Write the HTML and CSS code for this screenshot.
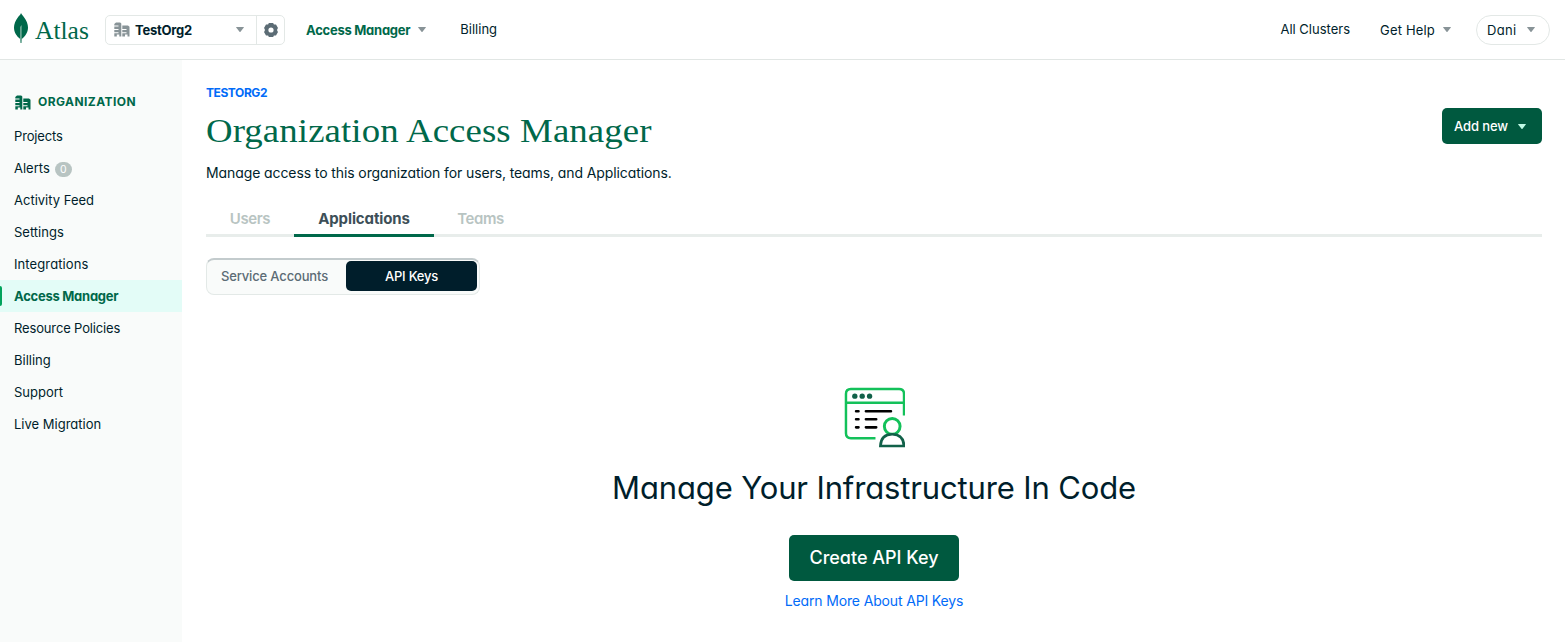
FILE: index.html
```html
<!DOCTYPE html>
<html lang="en">
<head>
<meta charset="utf-8">
<title>Organization Access Manager</title>
<link rel="stylesheet" href="styles.css">
</head>
<body>
<svg class="defs" width="0" height="0" aria-hidden="true">
  <symbol id="org" viewBox="0 0 16 15">
    <path fill="currentColor" d="M2 .5H6.200L7.300 1.500V14.500H5.300V12.500H2.800V14.500H.3V11.200H4.500V10.200H.3V7.900H4.500V6.900H.3V4.600H4.500V3.600H.3V2ZM8.300 3.500H14L15.500 4.800V14.500H13.500V12.500H11V14.500H8.300V11.200H12.500V10.200H8.300V7.900H12.500V6.900H8.300Z"/>
  </symbol>
  <symbol id="caret" viewBox="0 0 8 5">
    <path fill="currentColor" d="M.5 0H7.500Q8.200 0 7.800.6L4.500 4.700Q4 5.200 3.500 4.700L.2.600Q-.2 0 .5 0Z"/>
  </symbol>
</svg>

<header class="topbar">
  <a class="brand">
    <svg class="leaf" width="14" height="31" viewBox="0 0 14 31">
      <path fill="#00684a" d="M7 0C7.600 1.600 8.800 2.300 10 4.200C12.500 7.500 14 11 14 14.500C14 19.500 11.300 23.300 7.700 26L7.400 30H6.600L6.200 26C2.500 23 0 19.500 0 14.500C0 11 1.500 7.500 4 4.200C5.200 2.600 6.500 1.700 7 0Z"/>
      <path fill="#82b5a3" d="M7.600 12V26L7.400 30H6.700L6.200 25.800V14Z"/>
    </svg>
    <span class="brand-name">Atlas</span>
  </a>
  <div class="org-picker">
    <div class="org-current">
      <svg class="org-icon" width="16" height="15"><use href="#org"/></svg>
      <span class="org-name">TestOrg2</span>
      <svg class="caret" width="8" height="5"><use href="#caret"/></svg>
    </div>
    <div class="org-settings">
      <svg width="14" height="14" viewBox="0 0 14 14"><path fill="#5c6c75" fill-rule="evenodd" d="M4.800 0H9.200L9.700 1.200L10.400 1.600L12 1.500L14 5L13.200 6.300V7.700L14 9L12 12.500L10.400 12.400L9.700 12.800L9.200 14H4.800L4.300 12.800L3.600 12.400L2 12.500L0 9L.8 7.700V6.300L0 5L2 1.500L3.600 1.600L4.300 1.200ZM7 4.400A2.600 2.600 0 1 0 7 9.600A2.600 2.600 0 1 0 7 4.400Z"/></svg>
    </div>
  </div>
  <nav class="primary">
    <a class="primary-link current">Access Manager <svg class="caret" width="8" height="5"><use href="#caret"/></svg></a>
    <a class="primary-link raised">Billing</a>
  </nav>
  <nav class="account">
    <a class="raised clusters">All Clusters</a>
    <a class="help">Get Help <svg class="caret" width="8" height="5"><use href="#caret"/></svg></a>
    <a class="user">Dani <svg class="caret" width="8" height="5"><use href="#caret"/></svg></a>
  </nav>
</header>

<div class="body">
  <aside class="sidebar">
    <h2 class="side-title"><svg width="16" height="15"><use href="#org"/></svg>ORGANIZATION</h2>
    <a class="side-link tight">Projects</a>
    <a class="side-link">Alerts <span class="count">0</span></a>
    <a class="side-link">Activity Feed</a>
    <a class="side-link">Settings</a>
    <a class="side-link wide">Integrations</a>
    <a class="side-link active">Access Manager</a>
    <a class="side-link tight">Resource Policies</a>
    <a class="side-link">Billing</a>
    <a class="side-link">Support</a>
    <a class="side-link">Live Migration</a>
  </aside>

  <main class="content">
    <div class="heading">
      <div class="heading-text">
        <a class="crumb">TESTORG2</a>
        <h1 class="title">Organization Access Manager</h1>
        <p class="lede">Manage access to this organization for users, teams, and Applications.</p>
      </div>
      <button class="add-new">Add new <svg class="caret-light" width="8" height="5"><use href="#caret"/></svg></button>
    </div>

    <div class="tabs">
      <a class="tab users">Users</a>
      <a class="tab selected">Applications</a>
      <a class="tab teams">Teams</a>
    </div>

    <div class="segmented">
      <a class="segment">Service Accounts</a>
      <a class="segment chosen">API Keys</a>
    </div>

    <section class="empty">
      <svg width="61" height="61" viewBox="0 0 62 62" fill="none">
        <path stroke="#13c15a" stroke-width="2.500" d="M32 52H7Q2 52 2 47V7Q2 2 7 2H56Q61 2 61 7V29M2 16H61"/>
        <g fill="#116149"><circle cx="11" cy="9.300" r="2.700"/><circle cx="18.500" cy="9.300" r="2.700"/><circle cx="26" cy="9.300" r="2.700"/></g>
        <path stroke="#000" stroke-width="2.700" stroke-linecap="round" d="M12.300 24.600H14.700M22.300 24.600H47.700M12.300 32.800H14.700M22.300 32.800H32.700M12.300 41H14.700M22.300 41H32.700"/>
        <circle cx="49" cy="40" r="8" stroke="#13c15a" stroke-width="3" fill="#fff"/>
        <path stroke="#116149" stroke-width="2.700" d="M37 60Q37.500 48 49 48T61 60Z" fill="#fff"/>
      </svg>
      <h2 class="empty-title">Manage Your Infrastructure In Code</h2>
      <button class="create">Create API Key</button>
      <a class="learn">Learn More About API Keys</a>
    </section>
  </main>
</div>
</body>
</html>
```
FILE: styles.css
```css
* { box-sizing: border-box; }

body {
  margin: 0;
  height: 642px;
  overflow: hidden;
  display: flex;
  flex-direction: column;
  background: #fff;
  color: #001e2b;
  font: 13px/20px Inter, "Liberation Sans", sans-serif;
  font-feature-settings: "cv11";
}

h1, h2, p { margin: 0; }
svg { display: block; flex: none; }
button { border: 0; padding: 0; font: inherit; font-feature-settings: inherit; }
.defs { position: absolute; }
.caret { color: #889397; }

/* Top bar */
.topbar {
  flex: none;
  height: 60px;
  display: flex;
  align-items: center;
  padding: 0 15px 0 14px;
  border-bottom: 1px solid #e1e6e4;
}
.brand { display: flex; align-items: center; width: 91px; height: 59px; color: #00684a; }
.leaf { margin-bottom: 2px; }
.brand-name {
  margin: 3px 0 0 7px;
  font: 25.5px/30px "Liberation Serif", serif;
}
.org-picker {
  display: flex;
  width: 180px;
  height: 30px;
  border: 1px solid #e3e8e6;
  border-radius: 5px;
}
.org-current { display: flex; align-items: center; width: 151px; padding: 0 12px 0 8px; border-right: 1px solid #e3e8e6; }
.org-icon { color: #889397; }
.org-name { flex: 1; margin: 1px 0 0 5px; font-weight: 700; letter-spacing: -.23px; }
.org-settings { flex: 1; display: grid; place-items: center; }
.primary { display: flex; margin-left: 21px; }
.primary-link { display: flex; align-items: center; }
.primary-link.current { gap: 8px; margin-right: 34px; color: #00684a; font-weight: 700; letter-spacing: -.26px; }
.raised { padding-bottom: 2px; }
.account { display: flex; align-items: center; margin-left: auto; }
.clusters { margin-right: 30px; }
.help { display: flex; align-items: center; gap: 8px; margin-right: 25px; letter-spacing: .18px; }
.user {
  display: flex;
  align-items: center;
  justify-content: space-between;
  width: 74px;
  height: 30px;
  padding: 0 14px 0 10px;
  border: 1px solid #e3e8e6;
  border-radius: 15px;
  letter-spacing: .3px;
}

/* Side navigation */
.body { flex: 1; display: flex; }
.sidebar { width: 182px; padding-top: 32px; background: #f9fbfa; }
.side-title {
  display: flex;
  align-items: center;
  gap: 7px;
  height: 20px;
  margin-bottom: 8px;
  padding-left: 15px;
  color: #00684a;
  font-size: 12px;
  letter-spacing: .43px;
}
.side-link { position: relative; display: flex; align-items: center; height: 32px; padding-left: 14px; }
.side-link.tight { letter-spacing: -.15px; }
.side-link.wide { letter-spacing: .1px; }
.side-link.active { background: #e3fcf7; color: #00684a; font-weight: 700; letter-spacing: -.26px; }
.side-link.active::before {
  content: "";
  position: absolute;
  left: 0;
  top: 6px;
  width: 2px;
  height: 20px;
  border-radius: 0 4px 4px 0;
  background: #00a35c;
}
.count {
  width: 17px;
  height: 15px;
  margin: 2px 0 0 5px;
  border-radius: 8px;
  background: #b8c4c2;
  color: #fff;
  font-size: 10.5px;
  line-height: 15px;
  text-align: center;
}

/* Page heading */
.content { flex: 1; padding: 23px 23px 0 24px; }
.heading { display: flex; justify-content: space-between; height: 121px; }
.heading-text { display: flex; flex-direction: column; }
.crumb { color: #016bf8; font-size: 12px; font-weight: 700; letter-spacing: -.43px; }
.title {
  margin-top: 8px;
  color: #00684a;
  font: 34px/40px "Liberation Serif", serif;
  letter-spacing: .1px;
  white-space: nowrap;
  transform: scaleX(1.082);
  transform-origin: left;
}
.lede { margin-top: 12px; font-size: 14px; letter-spacing: -.1px; }
.add-new {
  display: flex;
  align-items: center;
  justify-content: space-between;
  width: 100px;
  height: 36px;
  margin-top: 25px;
  padding: 0 16px 0 12px;
  border-radius: 5px;
  background: #00593f;
  color: #fff;
  font-weight: 500;
  letter-spacing: -.1px;
}
.caret-light { color: #c0fae6; }

/* Tabs */
.tabs { display: flex; height: 33px; box-shadow: inset 0 -3px #e8edeb; }
.tab {
  display: flex;
  justify-content: center;
  padding-top: 5px;
  color: #b8c4c2;
  font-size: 15px;
  font-weight: 600;
  letter-spacing: -.4px;
}
.users { width: 88px; }
.selected { width: 140px; border-bottom: 3px solid #00684a; color: #3d4f58; font-weight: 700; letter-spacing: -.12px; }
.teams { width: 93px; }

/* Segmented control */
.segmented {
  display: flex;
  align-items: flex-start;
  width: 274px;
  height: 37px;
  margin-top: 21px;
  padding: 1px 2px 0 0;
  border: 1px solid #e3e9e7;
  border-top: 2px solid #c3cbcd;
  border-radius: 8px;
  background: #f9fbfa;
}
.segment { width: 139px; color: #5c6c75; font-weight: 500; letter-spacing: -.16px; line-height: 30px; text-align: center; padding-right: 4px; }
.chosen { width: 131px; padding: 0; border-radius: 5px; background: #001e2b; color: #fff; letter-spacing: -.23px; }

/* Empty state */
.empty { display: flex; flex-direction: column; align-items: center; margin-top: 92px; }
.empty-title { margin-top: 20px; font-size: 31px; font-weight: 400; line-height: 40px; letter-spacing: -.14px; }
.create {
  width: 170px;
  height: 46px;
  margin-top: 27px;
  border-radius: 5px;
  background: #00593f;
  color: #fff;
  font-size: 18px;
  font-weight: 500;
}
.learn { margin-top: 10px; color: #016bf8; font-size: 14px; letter-spacing: -.15px; }
```
